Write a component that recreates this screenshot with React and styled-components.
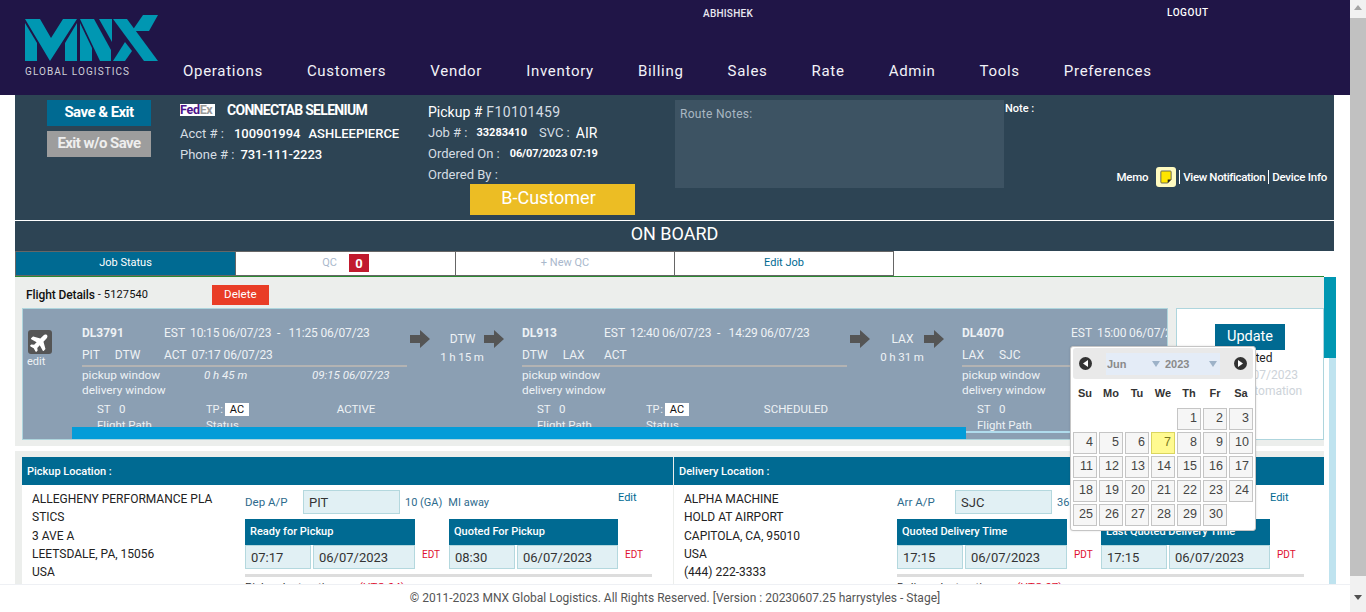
import React from "react";
import styled, { createGlobalStyle } from "styled-components";
import { FaPlane } from "react-icons/fa";

const Global = createGlobalStyle`
  html, body { margin: 0; padding: 0; height: 100%; overflow: hidden; background: #fff; }
  body { font-family: Roboto, "Liberation Sans", sans-serif; font-size: 12px; color: #222; }
  * { box-sizing: border-box; }
`;

const Shell = styled.div`display: flex; width: 1366px; height: 612px; position: relative; overflow: hidden;`;
const Main = styled.div`width: 1350px; height: 612px; display: flex; flex-direction: column;`;
const Scrollbar = styled.div`width: 16px; background: #f1f1f1; display: flex; flex-direction: column; align-items: center; padding-top: 5px;`;
const ScrollUp = styled.div`width: 0; height: 0; border: 4px solid transparent; border-top: 0; border-bottom: 5px solid #a3a3a3; margin-bottom: 8px;`;
const ScrollThumb = styled.div`width: 16px; height: 558px; background: #c1c1c1;`;
const ScrollDown = styled.div`width: 0; height: 0; border: 4px solid transparent; border-bottom: 0; border-top: 5px solid #505050; margin-top: 19px;`;

const Header = styled.header`height: 95px; flex: none; background: #201547; display: flex; color: #fff;`;
const Brand = styled.div`width: 183px; padding: 15px 0 0 25px;`;
const BrandSub = styled.div`font-size: 10px; letter-spacing: 1.07px; color: #cfd0d8; line-height: 12px; margin-top: 4px; white-space: nowrap;`;
const HeaderRight = styled.div`flex: 1; display: flex; flex-direction: column;`;
const TopLine = styled.div`height: 61px; display: flex; font-size: 10px; font-weight: 500; padding-top: 7px; color: #e8e8f0; letter-spacing: .25px;`;
const UserName = styled.div`margin-left: 520px; width: 464px; padding-top: 1px;`;
const Logout = styled.div`color: #fff; letter-spacing: .55px;`;
const Nav = styled.nav`display: flex; gap: 44px; font-size: 15px; letter-spacing: .71px; line-height: 20px; color: #f2f2f8;`;

const Content = styled.div`flex: 1; overflow: hidden; padding-left: 15px;`;
const JobHead = styled.section`width: 1319px; height: 125px; background: #2d4454; display: flex; color: #d5dde3; font-size: 13px;`;
const Actions = styled.div`width: 104px; margin: 5px 29px 0 32px; display: flex; flex-direction: column; gap: 5px;`;
const ActionBtn = styled.div`height: 26px; padding-bottom: 2px; background: ${p => p.$bg}; color: ${p => p.$color || "#fff"}; font-size: 15px; font-weight: 700; letter-spacing: -.55px; display: flex; align-items: center; justify-content: center;`;
const Account = styled.div`width: 248px; padding-top: 6px;`;
const InfoLine = styled.div`height: ${p => p.$h || 21}px; display: flex; align-items: center; white-space: nowrap;`;
const Strong = styled.span`color: #fff; font-weight: ${p => p.$w || 500}; font-size: ${p => p.$s || 13}px; margin-left: ${p => p.$m || 0}px; letter-spacing: ${p => p.$ls || 0}px;`;
const FedEx = styled.span`width: 35px; height: 12px; background: #fff; font-size: 12.5px; font-weight: 700; line-height: 12px; letter-spacing: -.3px; display: flex;`;
const Fed = styled.span`color: #4d148c;`;
const Ex = styled.span`color: #9a9a9a;`;
const PickupCol = styled.div`width: 247px; padding-top: 6px;`;
const BCustomer = styled.div`width: 165px; height: 31px; margin: 0 0 0 42px; padding: 0 8px 4px 0; background: #ecbd24; color: #fff; font-size: 18px; display: flex; align-items: center; justify-content: center;`;
const RouteNotes = styled.div`width: 329px; height: 88px; margin-top: 5px; background: #3d5363; color: #a9b7c2; font-size: 12px; letter-spacing: .3px; padding: 7px 5px;`;
const NoteCol = styled.div`flex: 1; padding: 7px 7px 0 1px; display: flex; flex-direction: column;`;
const NoteLabel = styled.div`font-size: 11px; font-weight: 500; color: #fff; height: 14px;`;
const MemoRow = styled.div`display: flex; align-items: center; justify-content: flex-end; margin-top: 51px; height: 20px; color: #fff; font-size: 11.5px; font-weight: 500; letter-spacing: -.25px;`;
const MemoIcon = styled.div`width: 20px; height: 20px; margin: 0 3px 0 8px; background: #fffbc0; border-radius: 3px; display: flex; align-items: center; justify-content: center;`;
const Sep = styled.span`border-left: 1px solid #fff; height: 14px; padding-left: 3px; line-height: 14px; margin-left: ${p => p.$m || 0}px; letter-spacing: ${p => p.$ls || -0.25}px;`;

const StateBar = styled.div`width: 1319px; height: 31px; background: #2d4454; border-top: 1px solid #fff; color: #fff; font-size: 18px; text-align: center; line-height: 25px;`;
const Tabs = styled.div`width: 1319px; height: 25px; display: flex;`;
const Tab = styled.div`width: ${p => p.$w}px; height: 25px; padding-bottom: 2px; border: 1px solid #666; border-left-width: ${p => (p.$first ? 1 : 0)}px; background: ${p => p.$bg || "#fff"}; color: ${p => p.$color}; font-size: 11px; display: flex; align-items: center; justify-content: center; gap: 12px;`;
const Badge = styled.span`width: 20px; height: 18px; margin-top: 1px; background: #c11a2e; color: #fff; font-size: 13px; font-weight: 700; display: flex; align-items: center; justify-content: center;`;

const WorkRow = styled.div`display: flex; width: 1321px;`;
const Panels = styled.div`width: 1309px;`;
const Rail = styled.div`width: 12px; display: flex; flex-direction: column; align-items: flex-end; border-top: 1px solid transparent;`;
const RailThumb = styled.div`width: 12px; height: 81px; background: #0097b2;`;
const RailTrack = styled.div`width: 7px; height: 400px; background: #bfe3ef;`;

const FlightPanel = styled.section`height: 170px; background: #eceeec; border-top: 1px solid #2c8a33; padding: 0 0 0 7px;`;
const FlightTitle = styled.div`height: 30px; display: flex; align-items: center; padding: 5px 0 0 4px; color: #111; font-size: 12px;`;
const TitleName = styled.b`font-weight: 500; letter-spacing: -.1px;`;
const TitleId = styled.span`width: 114px; margin-left: 3px; font-size: 11px; letter-spacing: .15px;`;
const DeleteBtn = styled.div`width: 57px; height: 20px; padding-bottom: 1px; background: #e93d26; color: #fff; font-size: 11.5px; display: flex; align-items: center; justify-content: center;`;
const FlightRow = styled.div`display: flex; gap: 8px; margin-top: 1px;`;
const FlightCard = styled.div`width: 1147px; height: 132px; background: #8b9fb3; border: 1px solid #aed5dd; display: flex; position: relative; overflow: hidden; padding-top: 14px; color: #eef2f5;`;
const PlaneCol = styled.div`width: 59px; flex: none; padding: 7px 0 0 5px; font-size: 11px;`;
const PlaneBox = styled.div`width: 24px; height: 24px; background: #555; border-radius: 3px; display: flex; align-items: center; justify-content: center; color: #fff;`;
const EditSmall = styled.div`line-height: 14px; margin-top: 1px; margin-left: -1px;`;
const Segment = styled.div`width: 325px; flex: none;`;
const SegRow = styled.div`display: grid; grid-template-columns: ${p => p.$cols}; height: ${p => p.$h || 20}px; margin-top: ${p => p.$mt || 0}px; align-items: center; white-space: pre; font-size: ${p => p.$fs || 12}px; padding-left: ${p => p.$pl || 0}px;`;
const Code = styled.div`font-weight: 700; font-size: 12px; color: #eef2f5;`;
const Small = styled.span`font-size: 12px; margin-right: ${p => p.$mr || 0}px;`;
const Times = styled.span`font-size: 12px; letter-spacing: -.15px;`;
const Rule = styled.div`height: 2px; background: #b3b3b3;`;
const Ital = styled.div`font-style: italic; font-size: 11.5px;`;
const Pair = styled.div`display: flex; gap: 15px; font-size: 12px;`;
const TpLabel = styled.span`font-size: 11px; word-spacing: -2px;`;
const AcBox = styled.span`display: inline-block; width: 24px; height: 13px; background: #fff; color: #111; font-size: 11px; line-height: 13px; text-align: center; margin-left: 2px;`;
const Centered = styled.div`text-align: center; font-size: 11.5px;`;
const Connector = styled.div`width: 115px; flex: none; font-size: 12px; padding: 6px 0 0 3px;`;
const ConnTop = styled.div`display: flex; align-items: center; height: 20px;`;
const ConnLabel = styled.div`width: 54px; text-align: center; padding-left: 11px;`;
const ConnDur = styled.div`width: 104px; text-align: center; margin-top: 1px; font-size: 11.5px; letter-spacing: -.1px;`;
const Progress = styled.div`position: absolute; left: 49px; bottom: 0; width: 894px; height: 12px; background: #049cd8;`;
const ProgressRest = styled.div`position: absolute; left: 943px; bottom: 6px; right: 0; height: 2px; background: #b0dced;`;

const UpdateCard = styled.div`width: 148px; height: 132px; background: #fff; border: 1px solid #aed5dd; display: flex; flex-direction: column; align-items: center; padding-top: 15px; font-size: 12px; line-height: 16px; color: #cdd3d9;`;
const UpdateBtn = styled.div`width: 70px; height: 26px; background: #006a92; color: #fff; font-size: 14.5px; display: flex; align-items: center; justify-content: center;`;
const Updated = styled.div`color: #222; margin-bottom: 1px;`;
const UpdateMeta = styled.div`margin-left: ${p => p.$m}px;`;

const LocPanel = styled.section`margin-top: 5px; background: #eceeec; padding: 6px 0 0 7px; height: 200px; display: flex;`;
const LocCard = styled.div`width: ${p => p.$w}px; height: 190px; background: #fff; margin-right: ${p => p.$mr || 0}px;`;
const LocHead = styled.div`height: 28px; background: #006a92; color: #fff; font-size: 11px; font-weight: 500; display: flex; align-items: center; padding-left: ${p => p.$pl || 5}px;`;
const LocBody = styled.div`display: flex;`;
const Address = styled.div`width: 223px; padding: 5px 31px 0 10px; font-size: 12px; line-height: 18.3px; word-break: break-all; color: #222;`;
const Details = styled.div`flex: 1; padding-top: 5px;`;
const AirportRow = styled.div`display: grid; grid-template-columns: 58px 97px 218px auto; height: 24px; align-items: center; color: #2e6b8d; font-size: 11.5px;`;
const Field = styled.div`height: ${p => p.$h || 24}px; width: ${p => p.$w ? p.$w + "px" : "auto"}; background: #e1f0f4; border: 1px solid #b4d8de; color: #333; font-size: 13px; padding-left: 5px; display: flex; align-items: center;`;
const Away = styled.div`padding-left: 5px; display: flex; gap: 6px; white-space: nowrap; font-size: 11px;`;
const EditLink = styled.div`align-self: start; color: #006a92; font-size: 11px; margin-top: 1px;`;
const TimesRow = styled.div`display: flex; margin-top: 5px;`;
const TimeBlock = styled.div`width: ${p => p.$w}px;`;
const TimeHead = styled.div`height: 26px; padding: 0 0 1px 5px; background: #006a92; color: #fff; font-size: 11px; font-weight: 500; display: flex; align-items: center;`;
const TimeFields = styled.div`display: flex; gap: 2px;`;
const Zone = styled.div`width: ${p => p.$w}px; padding: 30px 0 0 7px; color: #e01030; font-size: 10px;`;
const GreyRule = styled.div`width: 407px; height: 3px; background: #ddd; margin-top: 5px;`;
const Instr = styled.div`margin-top: 3px; font-size: 11.5px; color: #333; white-space: nowrap;`;
const Utc = styled.span`color: #e01030; margin-left: 10px;`;

const Footer = styled.footer`height: 28px; flex: none; background: #fff; border-top: 1px solid #eef0f4; color: #555; font-size: 12px; text-align: center; line-height: 27px;`;

const Calendar = styled.div`position: absolute; left: 1070px; top: 346px; width: 186px; height: 185px; background: #fff; border: 1px solid #c5c5c5; border-radius: 3px; padding: 1px 2px; box-shadow: 0 0 2px rgba(0,0,0,.15); font-family: "Liberation Sans", Arial, sans-serif;`;
const CalHead = styled.div`height: 31px; background: #e9e9e9; border-radius: 3px; display: flex; align-items: center; padding: 0 6px; gap: 7px;`;
const CalNav = styled.div`width: 13px; height: 13px; border-radius: 50%; background: #333; display: flex; align-items: center; justify-content: center; flex: none;`;
const CalSelects = styled.div`width: 115px; height: 22px; background: #e4ecf7; display: flex; align-items: center; color: #8a8a8a; font-size: 11px; font-weight: 700; margin: 0 7px; padding-left: 1px;`;
const CalValue = styled.span`width: ${p => p.$w}px; margin-left: ${p => p.$ml || 0}px;`;
const CalArrow = styled.span`width: 0; height: 0; border: 4px solid transparent; border-top: 6px solid #9db2c8; border-bottom: 0; margin-right: ${p => p.$mr}px;`;
const DayNames = styled.div`display: grid; grid-template-columns: repeat(7, 1fr); gap: 2px; height: 29px; padding: 0 0 2px 0; align-items: center; width: 180px; font-size: 11px; font-weight: 700; text-align: center; color: #333;`;
const DayGrid = styled.div`display: grid; grid-template-columns: repeat(7, 1fr); grid-auto-rows: 22px; gap: 2px; width: 180px;`;
const Day = styled.div`background: ${p => (p.$today ? "#fffa90" : "#f6f6f6")}; border: 1px solid ${p => (p.$today ? "#dad55e" : "#c5c5c5")}; color: ${p => (p.$today ? "#777620" : "#454545")}; font-size: 12.5px; text-align: right; padding: 2px 3px 0 0; grid-column-start: ${p => p.$start || "auto"};`;

const Logo = () => (
  <svg width="133" height="47" viewBox="0 0 133 47" fill="#0097b2" style={{ display: "block" }}>
    <polygon points="0,8 12,28 12,46 0,46" />
    <polygon points="0,4 15,4 26,23 38,4 52,4 25,46" />
    <polygon points="40,28 52,8 52,46 40,46" />
    <polygon points="55,4 69,4 86,35 86,46 75,46" />
    <polygon points="55,8 67,33 67,46 55,46" />
    <polygon points="74,4 87,4 87,27" />
    <polygon points="88,4 102,4 133,46 119,46" />
    <polygon points="88,46 100,46 107,36 100,27" />
    <polygon points="118,0 133,0 124,16 107,16" />
  </svg>
);

const BlockArrow = () => (
  <svg width="20" height="18" viewBox="0 0 20 18" fill="#555" style={{ flex: "none", display: "block" }}>
    <path d="M0 5h10V0l10 9-10 9v-5H0z" />
  </svg>
);

const Note = () => (
  <svg width="12" height="14" viewBox="0 0 14 16">
    <path d="M2 1h10a1 1 0 0 1 1 1v9l-4 4H2a1 1 0 0 1-1-1V2a1 1 0 0 1 1-1z" fill="#ffe600" stroke="#555" />
    <path d="M9 15v-4h4z" fill="#222" />
  </svg>
);

const Tri = ({ right }) => (
  <svg width="5" height="7" viewBox="0 0 5 7" fill="#fff"><path d={right ? "M0 0l5 3.5L0 7z" : "M5 0L0 3.5 5 7z"} /></svg>
);

const flights = [
  { code: "DL3791", from: "PIT", to: "DTW", est: "10:15 06/07/23  -   11:25 06/07/23", act: "07:17 06/07/23", dur: "0 h 45 m", win: "09:15 06/07/23", status: "ACTIVE", lead: 82 },
  { code: "DL913", from: "DTW", to: "LAX", est: "12:40 06/07/23  -   14:29 06/07/23", act: "", status: "SCHEDULED", lead: 82 },
  { code: "DL4070", from: "LAX", to: "SJC", est: "15:00 06/07/23", act: "", status: "", lead: 109 },
];
const stops = [{ c: "DTW", d: "1 h 15 m" }, { c: "LAX", d: "0 h 31 m" }];

const FlightSegment = ({ f }) => (
  <Segment>
    <SegRow $cols={`${f.lead}px 1fr`}>
      <Code>{f.code}</Code>
      <div><Small $mr={5}>EST</Small><Times>{f.est}</Times></div>
    </SegRow>
    <SegRow $cols={`${f.lead}px 1fr`} $h={21} $mt={1}>
      <Pair><span>{f.from}</span><span>{f.to}</span></Pair>
      <div><Small $mr={5}>ACT</Small><Times>{f.act}</Times></div>
    </SegRow>
    <Rule />
    <SegRow $cols="122px 108px 1fr" $h={15} $fs={11.8}>
      <div>pickup window</div><Ital>{f.dur}</Ital><Ital>{f.win}</Ital>
    </SegRow>
    <SegRow $cols="1fr" $h={15} $fs={11.8}><div>delivery window</div></SegRow>
    <SegRow $cols="109px 99px 102px" $h={14} $mt={5} $pl={15} $fs={11.5}>
      <div>ST   0</div>
      <div><TpLabel>TP :</TpLabel><AcBox>AC</AcBox></div>
      <Centered>{f.status}</Centered>
    </SegRow>
    <SegRow $cols="109px 99px" $h={14} $mt={2} $pl={15} $fs={11.5}>
      <div>Flight Path</div><div>Status</div>
    </SegRow>
  </Segment>
);

const Stop = ({ s }) => (
  <Connector>
    <ConnTop><BlockArrow /><ConnLabel>{s.c}</ConnLabel><BlockArrow /></ConnTop>
    <ConnDur>{s.d}</ConnDur>
  </Connector>
);

const TimeGroup = ({ title, time, date, w, zone, zw }) => (
  <>
    <TimeBlock $w={w}>
      <TimeHead>{title}</TimeHead>
      <TimeFields>
        <Field $w={66}>{time}</Field>
        <Field style={{ flex: 1 }}>{date}</Field>
      </TimeFields>
    </TimeBlock>
    <Zone $w={zw}>{zone}</Zone>
  </>
);

const Location = ({ w, mr, pl, title, lines, ap, code, away, t1, t2, zone, instr, utc }) => (
  <LocCard $w={w} $mr={mr}>
    <LocHead $pl={pl}>{title}</LocHead>
    <LocBody>
      <Address>{lines.map(l => <div key={l}>{l}</div>)}</Address>
      <Details>
        <AirportRow>
          <div>{ap}</div>
          <Field $w={97}>{code}</Field>
          <Away>{away.map(a => <span key={a}>{a}</span>)}</Away>
          <EditLink>Edit</EditLink>
        </AirportRow>
        <TimesRow>
          <TimeGroup title={t1.title} time={t1.time} date={t1.date} w={170} zone={zone} zw={34} />
          <TimeGroup title={t2.title} time={t2.time} date={t2.date} w={169} zone={zone} zw={30} />
        </TimesRow>
        <GreyRule />
        <Instr>{instr}<Utc>{utc}</Utc></Instr>
      </Details>
    </LocBody>
  </LocCard>
);

const days = Array.from({ length: 30 }, (_, i) => i + 1);

export default function App() {
  return (
    <>
      <Global />
      <Shell>
        <Main>
          <Header>
            <Brand>
              <Logo />
              <BrandSub>GLOBAL LOGISTICS</BrandSub>
            </Brand>
            <HeaderRight>
              <TopLine><UserName>ABHISHEK</UserName><Logout>LOGOUT</Logout></TopLine>
              <Nav>
                {["Operations", "Customers", "Vendor", "Inventory", "Billing", "Sales", "Rate", "Admin", "Tools", "Preferences"].map(n => <span key={n}>{n}</span>)}
              </Nav>
            </HeaderRight>
          </Header>
          <Content>
            <JobHead>
              <Actions>
                <ActionBtn $bg="#006a92">Save &amp; Exit</ActionBtn>
                <ActionBtn $bg="#9d9d9d" $color="#eee">Exit w/o Save</ActionBtn>
              </Actions>
              <Account>
                <InfoLine $h={18}><FedEx><Fed>Fed</Fed><Ex>Ex</Ex></FedEx><Strong $w={700} $s={14} $m={12} $ls={-.7}>CONNECTAB SELENIUM</Strong></InfoLine>
                <InfoLine $h={28}>Acct # : <Strong $m={10}>100901994</Strong><Strong $m={8}>ASHLEEPIERCE</Strong></InfoLine>
                <InfoLine $h={14}>Phone # : <Strong $m={6} $ls={-.1}>731-111-2223</Strong></InfoLine>
              </Account>
              <PickupCol>
                <InfoLine $h={21}><Strong $w={400} $s={14}>Pickup #</Strong><Strong $w={400} $s={14} $m={4} $ls={.4} style={{ color: "#d5dde3" }}>F10101459</Strong></InfoLine>
                <InfoLine>Job # : <Strong $w={700} $s={11} $m={9}>33283410</Strong><span style={{ marginLeft: 12 }}>SVC :</span><Strong $w={400} $s={14} $m={6}>AIR</Strong></InfoLine>
                <InfoLine>Ordered On : <Strong $w={700} $s={11} $m={10} $ls={-.1}>06/07/2023 07:19</Strong></InfoLine>
                <InfoLine $h={20}>Ordered By :</InfoLine>
                <BCustomer>B-Customer</BCustomer>
              </PickupCol>
              <RouteNotes>Route Notes:</RouteNotes>
              <NoteCol>
                <NoteLabel>Note :</NoteLabel>
                <MemoRow>
                  Memo
                  <MemoIcon><Note /></MemoIcon>
                  <Sep $ls={-0.37}>View Notification</Sep>
                  <Sep $m={3}>Device Info</Sep>
                </MemoRow>
              </NoteCol>
            </JobHead>
            <StateBar>ON BOARD</StateBar>
            <Tabs>
              <Tab $w={221} $first $bg="#006a92" $color="#fff">Job Status</Tab>
              <Tab $w={220} $color="#a9b8cc"><span>QC</span><Badge>0</Badge></Tab>
              <Tab $w={219} $color="#a9b8cc">+ New QC</Tab>
              <Tab $w={219} $color="#006a92">Edit Job</Tab>
            </Tabs>
            <WorkRow>
              <Panels>
                <FlightPanel>
                  <FlightTitle>
                    <TitleName>Flight Details</TitleName>
                    <TitleId>- 5127540</TitleId>
                    <DeleteBtn>Delete</DeleteBtn>
                  </FlightTitle>
                  <FlightRow>
                    <FlightCard>
                      <PlaneCol>
                        <PlaneBox><FaPlane size={20} style={{ transform: "rotate(-45deg)" }} /></PlaneBox>
                        <EditSmall>edit</EditSmall>
                      </PlaneCol>
                      <FlightSegment f={flights[0]} />
                      <Stop s={stops[0]} />
                      <FlightSegment f={flights[1]} />
                      <Stop s={stops[1]} />
                      <FlightSegment f={flights[2]} />
                      <Progress />
                      <ProgressRest />
                    </FlightCard>
                    <UpdateCard>
                      <UpdateBtn>Update</UpdateBtn>
                      <Updated>Updated</Updated>
                      <UpdateMeta $m={32}>06/07/2023</UpdateMeta>
                      <UpdateMeta $m={42}>Automation</UpdateMeta>
                    </UpdateCard>
                  </FlightRow>
                </FlightPanel>
                <LocPanel>
                  <Location w={651} mr={1} title="Pickup Location :"
                    lines={["ALLEGHENY PERFORMANCE PLASTICS", "3 AVE A", "LEETSDALE, PA, 15056", "USA"]}
                    ap="Dep A/P" code="PIT" away={["10 (GA)", "MI away"]}
                    t1={{ title: "Ready for Pickup", time: "07:17", date: "06/07/2023" }}
                    t2={{ title: "Quoted For Pickup", time: "08:30", date: "06/07/2023" }}
                    zone="EDT" instr="Pickup Instructions :" utc="(UTC-04)" />
                  <Location w={650} title="Delivery Location :"
                    lines={["ALPHA MACHINE", "HOLD AT AIRPORT", "CAPITOLA, CA, 95010", "USA", "(444) 222-3333"]}
                    ap="Arr A/P" code="SJC" away={["36 (GA)", "MI away"]}
                    t1={{ title: "Quoted Delivery Time", time: "17:15", date: "06/07/2023" }}
                    t2={{ title: "Last Quoted Delivery Time", time: "17:15", date: "06/07/2023" }}
                    zone="PDT" instr="Delivery Instructions :" utc="(UTC-07)" />
                </LocPanel>
              </Panels>
              <Rail><RailThumb /><RailTrack /></Rail>
            </WorkRow>
          </Content>
          <Footer>© 2011-2023 MNX Global Logistics. All Rights Reserved. [Version : 20230607.25 harrystyles - Stage]</Footer>
        </Main>
        <Scrollbar><ScrollUp /><ScrollThumb /><ScrollDown /></Scrollbar>
        <Calendar>
          <CalHead>
            <CalNav><Tri /></CalNav>
            <CalSelects>
              <CalValue $w={45}>Jun</CalValue><CalArrow $mr={2} />
              <CalValue $w={44} $ml={3}>2023</CalValue><CalArrow $mr={0} />
            </CalSelects>
            <CalNav><Tri right /></CalNav>
          </CalHead>
          <DayNames>{["Su", "Mo", "Tu", "We", "Th", "Fr", "Sa"].map(d => <span key={d}>{d}</span>)}</DayNames>
          <DayGrid>
            {days.map(d => <Day key={d} $today={d === 7} $start={d === 1 ? 5 : undefined}>{d}</Day>)}
          </DayGrid>
        </Calendar>
      </Shell>
    </>
  );
}
